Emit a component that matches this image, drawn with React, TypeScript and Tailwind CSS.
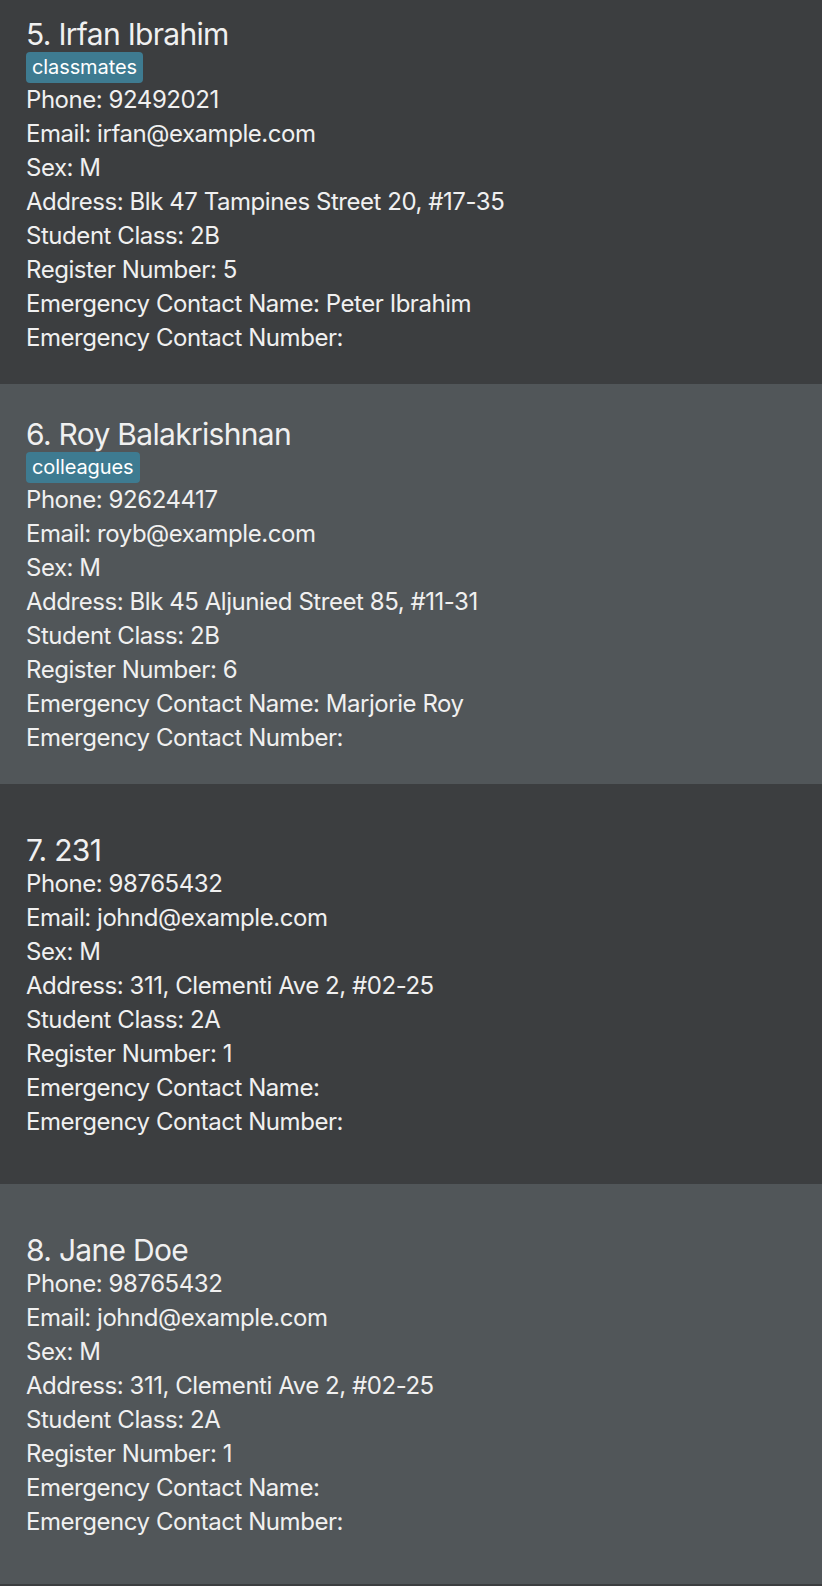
type Person = {
  index: number
  name: string
  tags: string[]
  phone: string
  email: string
  sex: string
  address: string
  studentClass: string
  registerNumber: string
  ecName: string
  ecNumber: string
}

const people: Person[] = [
  {
    index: 5,
    name: 'Irfan Ibrahim',
    tags: ['classmates'],
    phone: '92492021',
    email: 'irfan@example.com',
    sex: 'M',
    address: 'Blk 47 Tampines Street 20, #17-35',
    studentClass: '2B',
    registerNumber: '5',
    ecName: 'Peter Ibrahim',
    ecNumber: '',
  },
  {
    index: 6,
    name: 'Roy Balakrishnan',
    tags: ['colleagues'],
    phone: '92624417',
    email: 'royb@example.com',
    sex: 'M',
    address: 'Blk 45 Aljunied Street 85, #11-31',
    studentClass: '2B',
    registerNumber: '6',
    ecName: 'Marjorie Roy',
    ecNumber: '',
  },
  {
    index: 7,
    name: '231',
    tags: [],
    phone: '98765432',
    email: 'johnd@example.com',
    sex: 'M',
    address: '311, Clementi Ave 2, #02-25',
    studentClass: '2A',
    registerNumber: '1',
    ecName: '',
    ecNumber: '',
  },
  {
    index: 8,
    name: 'Jane Doe',
    tags: [],
    phone: '98765432',
    email: 'johnd@example.com',
    sex: 'M',
    address: '311, Clementi Ave 2, #02-25',
    studentClass: '2A',
    registerNumber: '1',
    ecName: '',
    ecNumber: '',
  },
]

function PersonCard({ person, odd }: { person: Person; odd: boolean }) {
  const rows = [
    `Phone: ${person.phone}`,
    `Email: ${person.email}`,
    `Sex: ${person.sex}`,
    `Address: ${person.address}`,
    `Student Class: ${person.studentClass}`,
    `Register Number: ${person.registerNumber}`,
    `Emergency Contact Name: ${person.ecName}`,
    `Emergency Contact Number: ${person.ecNumber}`,
  ]

  return (
    <div
      className={`h-[400px] flex flex-col justify-center pl-[26px] text-[#f0f0f0] ${
        odd ? 'bg-[#515659]' : 'bg-[#3c3e40]'
      }`}
    >
      <div className="text-[30px] leading-[38px] tracking-[-0.7px] pt-[2px] -mb-[2px]">
        {person.index}. {person.name}
      </div>
      {person.tags.length > 0 && (
        <div className="flex gap-1 h-[32px] pt-[1px]">
          {person.tags.map((tag) => (
            <span
              key={tag}
              className="h-[31px] px-[6px] rounded-[4px] bg-[#3e7b91] text-white text-[20px] leading-[31px] tracking-[-0.1px]"
            >
              {tag}
            </span>
          ))}
        </div>
      )}
      {rows.map((row) => (
        <div key={row} className="text-[24px] leading-[34px] tracking-[-0.45px] whitespace-pre">
          {row}
        </div>
      ))}
    </div>
  )
}

export default function App() {
  return (
    <div
      className="h-[1586px] overflow-hidden bg-[#3c3e40]"
      style={{ fontFamily: 'Inter, "Noto Sans", sans-serif' }}
    >
      <div className="-mt-[16px]">
        {people.map((person, i) => (
          <PersonCard key={person.index} person={person} odd={i % 2 === 1} />
        ))}
      </div>
    </div>
  )
}
